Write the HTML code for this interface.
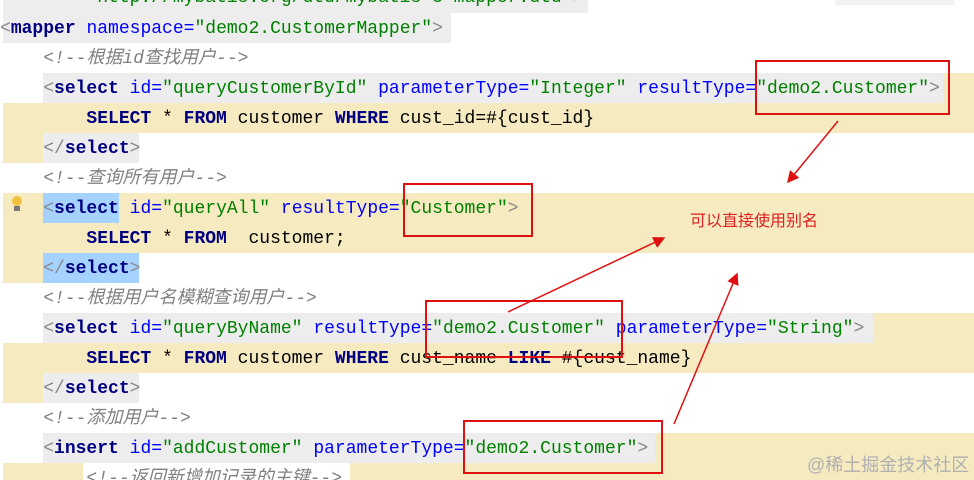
<!DOCTYPE html>
<html><head><meta charset="utf-8"><style>
html,body{margin:0;width:974px;height:480px;overflow:hidden;background:#fff;}
body{position:relative;font-family:"Liberation Mono","Noto Sans CJK SC",monospace;}
.bg{position:absolute;height:30px}
.y{background:#f6eac0}
.g{background:#ededed}
.b{background:#a6d2ff}
.l{position:absolute;left:0px;height:30px;line-height:30px;font-size:18px;white-space:pre;color:#000}
.t{color:#000080;font-weight:bold}
.a{color:#0000ff}
.v{color:#008000}
.c{color:#808080;font-style:italic}
.k{color:#000080;font-weight:bold}
.p{color:#888}
.box{position:absolute;border:2px solid #e01010}
</style></head><body>
<div class="bg g" style="left:3px;top:-17px;width:585px"></div>
<div class="bg g" style="left:3px;top:13px;width:448px"></div>
<div class="bg g" style="left:43px;top:73px;width:900px"></div>
<div class="bg y" style="left:943px;top:73px;width:31px"></div>
<div class="bg y" style="left:3px;top:103px;width:971px"></div>
<div class="bg y" style="left:3px;top:133px;width:40px"></div>
<div class="bg g" style="left:43px;top:133px;width:96px"></div>
<div class="bg y" style="left:3px;top:193px;width:971px"></div>
<div class="bg b" style="left:43px;top:193px;width:76px"></div>
<div class="bg y" style="left:3px;top:223px;width:971px"></div>
<div class="bg y" style="left:3px;top:253px;width:40px"></div>
<div class="bg b" style="left:43px;top:253px;width:96px"></div>
<div class="bg g" style="left:43px;top:313px;width:830px"></div>
<div class="bg y" style="left:873px;top:313px;width:101px"></div>
<div class="bg y" style="left:3px;top:343px;width:971px"></div>
<div class="bg y" style="left:3px;top:373px;width:40px"></div>
<div class="bg g" style="left:43px;top:373px;width:96px"></div>
<div class="bg g" style="left:43px;top:433px;width:612px"></div>
<div class="bg y" style="left:655px;top:433px;width:319px"></div>
<div class="bg y" style="left:3px;top:463px;width:80px"></div>
<div class="bg y" style="left:350px;top:463px;width:624px"></div>
<div style="position:absolute;left:835px;top:0;width:120px;height:5px;background:#f2f2f2"></div>
<div style="position:absolute;left:12px;top:196px;width:10px;height:10px;border-radius:50%;background:#f0c040"></div>
<div style="position:absolute;left:14px;top:206px;width:6px;height:5px;background:#777"></div>
<div class="l" style="top:-17px">        <span class="v">"http://mybatis.org/dtd/mybatis-3-mapper.dtd"</span><span class="p">&gt;</span></div>
<div class="l" style="top:14px"><span class="p">&lt;</span><span class="t">mapper </span><span class="a">namespace</span><span class="a">=</span><span class="v">"demo2.CustomerMapper"</span><span class="p">&gt;</span></div>
<div class="l c" style="top:44px">    &lt;!--根据id查找用户--&gt;</div>
<div class="l" style="top:74px">    <span class="p">&lt;</span><span class="t">select </span><span class="a">id=</span><span class="v">"queryCustomerById"</span> <span class="a">parameterType=</span><span class="v">"Integer"</span> <span class="a">resultType=</span><span class="v">"demo2.Customer"</span><span class="p">&gt;</span></div>
<div class="l" style="top:104px">        <span class="k">SELECT</span> * <span class="k">FROM</span> customer <span class="k">WHERE</span> cust_id=#{cust_id}</div>
<div class="l" style="top:134px">    <span class="p">&lt;/</span><span class="t">select</span><span class="p">&gt;</span></div>
<div class="l c" style="top:164px">    &lt;!--查询所有用户--&gt;</div>
<div class="l" style="top:194px">    <span class="p">&lt;</span><span class="t">select </span><span class="a">id=</span><span class="v">"queryAll"</span> <span class="a">resultType=</span><span class="v">"Customer"</span><span class="p">&gt;</span></div>
<div class="l" style="top:224px">        <span class="k">SELECT</span> * <span class="k">FROM</span>  customer;</div>
<div class="l" style="top:254px">    <span class="p">&lt;/</span><span class="t">select</span><span class="p">&gt;</span></div>
<div class="l c" style="top:284px">    &lt;!--根据用户名模糊查询用户--&gt;</div>
<div class="l" style="top:314px">    <span class="p">&lt;</span><span class="t">select </span><span class="a">id=</span><span class="v">"queryByName"</span> <span class="a">resultType=</span><span class="v">"demo2.Customer"</span> <span class="a">parameterType=</span><span class="v">"String"</span><span class="p">&gt;</span></div>
<div class="l" style="top:344px">        <span class="k">SELECT</span> * <span class="k">FROM</span> customer <span class="k">WHERE</span> cust_name <span class="k">LIKE</span> #{cust_name}</div>
<div class="l" style="top:374px">    <span class="p">&lt;/</span><span class="t">select</span><span class="p">&gt;</span></div>
<div class="l c" style="top:404px">    &lt;!--添加用户--&gt;</div>
<div class="l" style="top:434px">    <span class="p">&lt;</span><span class="t">insert </span><span class="a">id=</span><span class="v">"addCustomer"</span> <span class="a">parameterType=</span><span class="v">"demo2.Customer"</span><span class="p">&gt;</span></div>
<div class="l c" style="top:464px">        &lt;!--返回新增加记录的主键--&gt;</div>
<div class="box" style="left:755px;top:60px;width:191px;height:51px"></div>
<div class="box" style="left:403px;top:183px;width:126px;height:50px"></div>
<div class="box" style="left:425px;top:300px;width:194px;height:54px"></div>
<div class="box" style="left:463px;top:420px;width:196px;height:50px"></div>
<svg style="position:absolute;left:0;top:0" width="974" height="480">
<defs><marker id="ar" markerWidth="8" markerHeight="8" refX="7" refY="4" orient="auto"><path d="M0,0 L8,4 L0,8 Z" fill="#e01010"/></marker></defs>
<line x1="838" y1="121" x2="788" y2="182" stroke="#e01010" stroke-width="1.5" marker-end="url(#ar)"/>
<line x1="508" y1="312" x2="664" y2="238" stroke="#e01010" stroke-width="1.5" marker-end="url(#ar)"/>
<line x1="674" y1="424" x2="737" y2="274" stroke="#e01010" stroke-width="1.5" marker-end="url(#ar)"/>
</svg>
<div style="position:absolute;left:690px;top:207px;font-size:16px;color:#e02020;font-family:'Liberation Sans','Noto Sans CJK SC',sans-serif">可以直接使用别名</div>
<div style="position:absolute;left:807px;top:451px;font-size:18px;color:#b0b0b0;font-family:'Liberation Sans','Noto Sans CJK SC',sans-serif">@稀土掘金技术社区</div>
</body></html>
